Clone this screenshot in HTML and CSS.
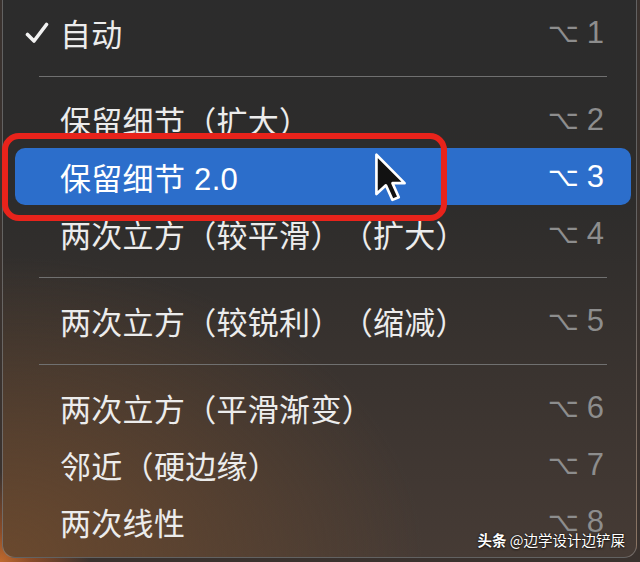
FILE: index.html
```html
<!DOCTYPE html>
<html lang="zh-CN">
<head>
<meta charset="utf-8">
<link rel="stylesheet" href="styles.css">
</head>
<body>
<div class="menu">
  <div class="item">
    <span class="mark"><svg width="24" height="22" viewBox="0 0 24 22"><path d="M2.5 12.5 L9 19 L21.5 2.5" fill="none" stroke="#f2f2f2" stroke-width="3.6" stroke-linecap="round" stroke-linejoin="round"/></svg></span>
    <span class="label">自动</span>
    <span class="key"><span class="opt">⌥</span>1</span>
  </div>
  <div class="sep"></div>
  <div class="item">
    <span class="mark"></span>
    <span class="label">保留细节（扩大）</span>
    <span class="key"><span class="opt">⌥</span>2</span>
  </div>
  <div class="item active">
    <span class="mark"></span>
    <span class="label">保留细节 2.0</span>
    <span class="key"><span class="opt">⌥</span>3</span>
  </div>
  <div class="item">
    <span class="mark"></span>
    <span class="label">两次立方（较平滑）（扩大）</span>
    <span class="key"><span class="opt">⌥</span>4</span>
  </div>
  <div class="sep"></div>
  <div class="item">
    <span class="mark"></span>
    <span class="label">两次立方（较锐利）（缩减）</span>
    <span class="key"><span class="opt">⌥</span>5</span>
  </div>
  <div class="sep"></div>
  <div class="item">
    <span class="mark"></span>
    <span class="label">两次立方（平滑渐变）</span>
    <span class="key"><span class="opt">⌥</span>6</span>
  </div>
  <div class="item">
    <span class="mark"></span>
    <span class="label">邻近（硬边缘）</span>
    <span class="key"><span class="opt">⌥</span>7</span>
  </div>
  <div class="item">
    <span class="mark"></span>
    <span class="label">两次线性</span>
    <span class="key"><span class="opt">⌥</span>8</span>
  </div>
</div>
<div class="annot"></div>
<svg class="cursor" width="34" height="54" viewBox="0 0 14 22"><path d="M1 1 L1 17.2 L4.9 13.6 L7.6 19.6 L10.2 18.5 L7.6 12.7 L12.6 12.7 Z" fill="#111" stroke="#fff" stroke-width="1.1" stroke-linejoin="round"/></svg>
<div class="watermark"><b>头条</b> @边学设计边铲屎</div>
</body>
</html>
```
FILE: styles.css
```css
html, body {
  margin: 0;
  padding: 0;
}
body {
  width: 640px;
  height: 562px;
  overflow: hidden;
  position: relative;
  background: radial-gradient(circle at 0 100%, #c06a2e 0, #8a4c28 30px, #3a322e 90px);
  font-family: "Liberation Sans", "Noto Sans CJK SC", sans-serif;
}
.menu {
  margin-left: 2px;
  width: 635px;
  height: 558px;
  box-sizing: border-box;
  padding-top: 4px;
  border: 1px solid rgba(200, 200, 200, 0.35);
  border-top: none;
  border-radius: 0 0 13px 13px;
  background:
    radial-gradient(ellipse 420px 300px at 0 100%, rgba(115, 76, 44, 0.8), rgba(115, 76, 44, 0) 100%),
    linear-gradient(to bottom, #2c2c2c 0, #2d2c2b 35%, #3b3430 70%, #463b35 100%);
}
.item {
  display: flex;
  align-items: center;
  height: 57px;
  margin: 0 5px 0 12px;
  padding: 0 27px 0 10px;
  border-radius: 10px;
  color: #ececec;
  font-size: 31px;
}
.item.active {
  background: #2c6ecb;
  color: #ffffff;
}
.mark {
  width: 35px;
  flex: none;
  display: flex;
  align-items: center;
}
.label {
  white-space: nowrap;
  letter-spacing: 0.3px;
  text-spacing-trim: space-all;
  font-feature-settings: "chws" 0, "halt" 0;
}
.key {
  margin-left: auto;
  color: #8d8d8d;
  font-family: "Liberation Sans", sans-serif;
  font-size: 31px;
  display: flex;
  align-items: baseline;
}
.item.active .key {
  color: #ffffff;
}
.opt {
  font-family: "DejaVu Sans", sans-serif;
  font-size: 27px;
  margin-right: 8px;
  position: relative;
  top: -1px;
}
.sep {
  height: 30px;
  display: flex;
  align-items: center;
  margin: 0 29px 0 36px;
}
.sep::before {
  content: "";
  flex: 1;
  height: 1px;
  background: #707070;
}
.annot {
  position: absolute;
  left: 2px;
  top: 133px;
  width: 445px;
  height: 88px;
  box-sizing: border-box;
  border: 6px solid #e8231b;
  border-radius: 17px;
}
.cursor {
  position: absolute;
  left: 374px;
  top: 152px;
}
.watermark {
  position: absolute;
  right: 15px;
  bottom: 12px;
  font-family: "Noto Sans CJK SC", sans-serif;
  font-size: 14.5px;
  color: #ffffff;
  text-shadow: 0 0 2px rgba(0, 0, 0, 0.7), 0 1px 2px rgba(0, 0, 0, 0.6);
  white-space: nowrap;
}
.watermark b {
  font-weight: 700;
}
```
